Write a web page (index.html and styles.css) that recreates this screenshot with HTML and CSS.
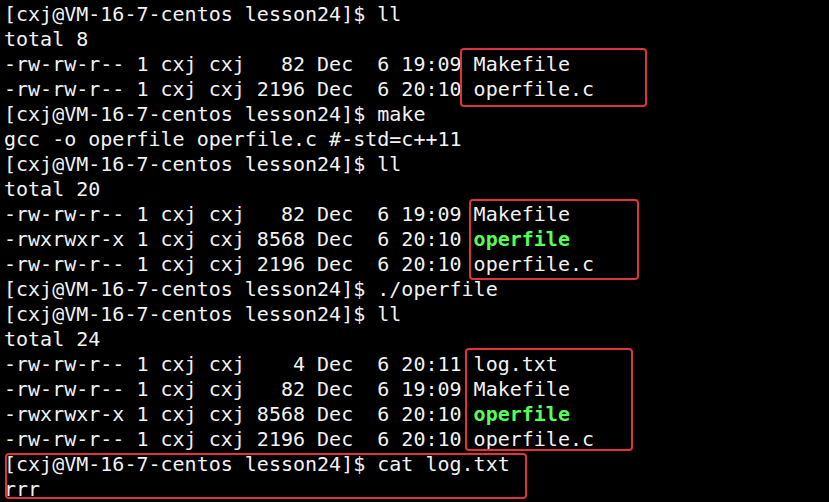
FILE: index.html
```html
<!DOCTYPE html>
<html>
<head>
<meta charset="utf-8">
<link rel="stylesheet" href="styles.css">
</head>
<body>
<div class="term">
<pre class="out">[cxj@VM-16-7-centos lesson24]$ ll
total 8
-rw-rw-r-- 1 cxj cxj   82 Dec  6 19:09 Makefile
-rw-rw-r-- 1 cxj cxj 2196 Dec  6 20:10 operfile.c
[cxj@VM-16-7-centos lesson24]$ make
gcc -o operfile operfile.c #-std=c++11
[cxj@VM-16-7-centos lesson24]$ ll
total 20
-rw-rw-r-- 1 cxj cxj   82 Dec  6 19:09 Makefile
-rwxrwxr-x 1 cxj cxj 8568 Dec  6 20:10 <b class="exe">operfile</b>
-rw-rw-r-- 1 cxj cxj 2196 Dec  6 20:10 operfile.c
[cxj@VM-16-7-centos lesson24]$ ./operfile
[cxj@VM-16-7-centos lesson24]$ ll
total 24
-rw-rw-r-- 1 cxj cxj    4 Dec  6 20:11 log.txt
-rw-rw-r-- 1 cxj cxj   82 Dec  6 19:09 Makefile
-rwxrwxr-x 1 cxj cxj 8568 Dec  6 20:10 <b class="exe">operfile</b>
-rw-rw-r-- 1 cxj cxj 2196 Dec  6 20:10 operfile.c
[cxj@VM-16-7-centos lesson24]$ cat log.txt
rrr</pre>
<div class="mark m1"></div>
<div class="mark m2"></div>
<div class="mark m3"></div>
<div class="mark m4"></div>
</div>
</body>
</html>
```
FILE: styles.css
```css
html, body {
  margin: 0;
  padding: 0;
  background: #000;
}
.term {
  position: relative;
  width: 829px;
  height: 502px;
  overflow: hidden;
  background: #000;
}
.out {
  margin: 0;
  padding: 2px 0 0 4px;
  font-family: "DejaVu Sans Mono", monospace;
  font-size: 20px;
  line-height: 25px;
  color: #f2f2f2;
}
.exe {
  color: #55ff55;
  font-weight: bold;
}
.mark {
  position: absolute;
  border: 2px solid #e0333a;
  border-radius: 4px;
  box-sizing: border-box;
}
.m1 { left: 460px; top: 48px; width: 187px; height: 59px; }
.m2 { left: 469px; top: 199px; width: 170px; height: 81px; }
.m3 { left: 465px; top: 348px; width: 168px; height: 103px; }
.m4 { left: 5px; top: 453px; width: 522px; height: 46px; }
```
